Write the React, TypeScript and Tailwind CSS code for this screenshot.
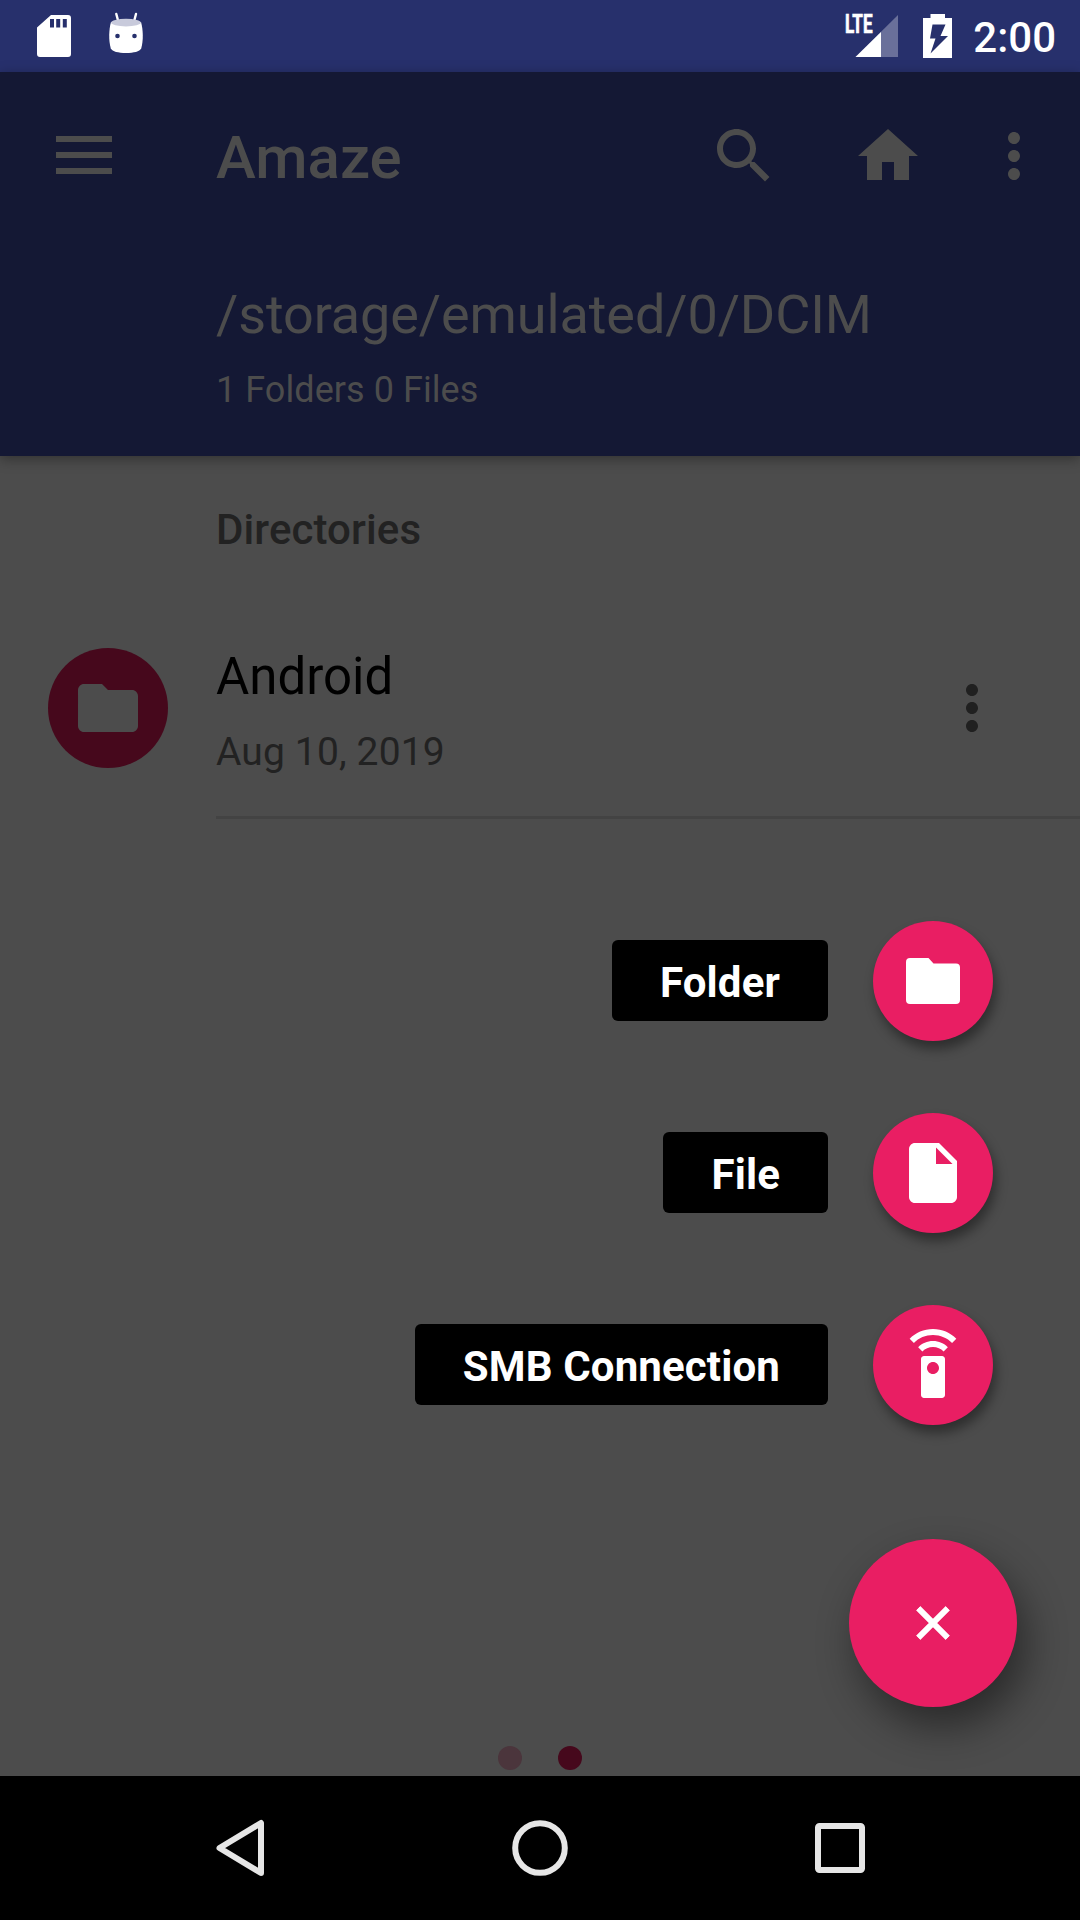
import type { ReactNode } from "react";

function MaterialIcon({ d, className }: { d: string; className?: string }) {
  return (
    <svg viewBox="0 0 24 24" className={`size-[72px] shrink-0 fill-current ${className ?? ""}`}>
      <path d={d} />
    </svg>
  );
}

const PATHS = {
  search:
    "M15.5 14h-.79l-.28-.27C15.41 12.59 16 11.11 16 9.5 16 5.91 13.09 3 9.5 3S3 5.91 3 9.5 5.91 16 9.5 16c1.61 0 3.09-.59 4.23-1.57l.27.28v.79l5 4.99L20.49 19l-4.99-5zm-6 0C7.01 14 5 11.99 5 9.5S7.01 5 9.5 5 14 7.01 14 9.5 11.99 14 9.5 14z",
  home: "M10 20v-6h4v6h5v-8h3L12 3 2 12h3v8z",
  more: "M12 8c1.1 0 2-.9 2-2s-.9-2-2-2-2 .9-2 2 .9 2 2 2zm0 2c-1.1 0-2 .9-2 2s.9 2 2 2 2-.9 2-2-.9-2-2-2zm0 6c-1.1 0-2 .9-2 2s.9 2 2 2 2-.9 2-2-.9-2-2-2z",
  folder: "M10 4H4c-1.1 0-1.99.9-1.99 2L2 18c0 1.1.9 2 2 2h16c1.1 0 2-.9 2-2V8c0-1.1-.9-2-2-2h-8l-2-2z",
  file: "M6 2c-1.1 0-1.99.9-1.99 2L4 20c0 1.1.89 2 1.99 2H18c1.1 0 2-.9 2-2V8l-6-6H6zm7 7V3.5L18.5 9H13z",
  remote:
    "M15 9H9c-.55 0-1 .45-1 1v12c0 .55.45 1 1 1h6c.55 0 1-.45 1-1V10c0-.55-.45-1-1-1zm-3 6c-1.1 0-2-.9-2-2s.9-2 2-2 2 .9 2 2-.9 2-2 2zM7.05 6.05l1.41 1.41C9.37 6.56 10.62 6 12 6s2.63.56 3.54 1.46l1.41-1.41C15.68 4.78 13.93 4 12 4s-3.68.78-4.95 2.05zM12 0C8.96 0 6.21 1.23 4.22 3.22l1.41 1.41C7.26 3.01 9.51 2 12 2s4.74 1.01 6.36 2.64l1.41-1.41C17.79 1.23 15.04 0 12 0z",
};

function StatusBar() {
  return (
    <div className="flex h-[72px] shrink-0 items-center bg-[#27306c] pl-9 pr-6 text-white">
      <svg viewBox="0 0 36 48" className="h-12 w-9">
        <path
          fillRule="evenodd"
          fill="#fff"
          d="M15 3H32a3 3 0 0 1 3 3V42a3 3 0 0 1-3 3H4a3 3 0 0 1-3-3V15.500zM14 7V15.500h4V7zM20.200 7V15.500h4V7zM26.800 7V15.500h4V7z"
        />
      </svg>
      <svg viewBox="0 0 36 48" className="ml-9 h-12 w-9">
        <path d="M8.300 2L10.300 9.500M28 2L26 9.500" stroke="#fff" strokeWidth="2.400" strokeLinecap="round" />
        <path
          fill="#fff"
          d="M3 10C.8 18 .5 28 2.800 36.500C4.500 39.500 10 41 18 41S31.500 39.500 33.200 36.500C35.500 28 35.200 18 33 10z"
        />
        <ellipse cx="18" cy="10.600" rx="15" ry="3.800" fill="#c8cadb" />
        <circle cx="9.500" cy="24" r="2.300" fill="#27306c" />
        <circle cx="26.500" cy="24" r="2.300" fill="#27306c" />
      </svg>
      <svg viewBox="0 0 60 48" className="ml-auto h-12 w-[60px] overflow-visible">
        <path d="M53 3V45H10.500z" fill="#6a709a" />
        <path d="M36 20V45H10.500z" fill="#fff" />
        <text
          x="0"
          y="21"
          fill="#fff"
          stroke="#fff"
          strokeWidth="0.700"
          fontFamily="Roboto, sans-serif"
          fontWeight="700"
          fontSize="25"
          textLength="27.500"
          lengthAdjust="spacingAndGlyphs"
        >
          LTE
        </text>
      </svg>
      <svg viewBox="0 0 30 48" className="ml-[18px] h-12 w-[30px]">
        <path
          fillRule="evenodd"
          fill="#fff"
          d="M7.500 2H22V6H29V46H0V6H7.500zM9.500 12.500L7 26.500H12.500L7.500 41.500L25 24H17.500L22.500 12.500z"
        />
      </svg>
      <span className="ml-5 mt-[3px] text-[42px] font-medium leading-[48px]">2:00</span>
    </div>
  );
}

function AppBar() {
  return (
    <header className="z-10 h-[384px] shrink-0 bg-[#141834] text-[#4c4c4c] shadow-[0_3px_12px_rgba(0,0,0,0.35)]">
      <div className="flex h-[168px] items-center pl-14 pr-[30px]">
        <div className="mb-0.5 flex w-40 flex-col gap-2.5">
          <i className="h-1.5 w-14 bg-current" />
          <i className="h-1.5 w-14 bg-current" />
          <i className="h-1.5 w-14 bg-current" />
        </div>
        <h1 className="mt-[3px] flex-1 text-[60px] font-medium leading-[72px]">Amaze</h1>
        <MaterialIcon d={PATHS.search} />
        <MaterialIcon d={PATHS.home} className="ml-[72px]" />
        <MaterialIcon d={PATHS.more} className="ml-[54px]" />
      </div>
      <div className="pl-[216px] pt-10">
        <p className="text-[54px] leading-[70px] tracking-[-0.1px]">/storage/emulated/0/DCIM</p>
        <p className="mt-[15px] text-[36px] leading-[50px] tracking-[0.06px]">1 Folders 0 Files</p>
      </div>
    </header>
  );
}

function DirectoryList() {
  return (
    <section>
      <h2 className="pl-[216px] pt-[49px] text-[42px] font-medium leading-[50px] tracking-[0.1px] text-[#222]">
        Directories
      </h2>
      <div className="mt-[42px] flex h-[219px] items-start pl-12">
        <div className="mt-[51px] flex size-[120px] items-center justify-center rounded-full bg-[#46081c] text-[#4c4c4c]">
          <MaterialIcon d={PATHS.folder} />
        </div>
        <div className="ml-12 mt-10 flex-1">
          <p className="text-[51px] leading-[80px] text-black">Android</p>
          <p className="text-[39px] leading-[70px] tracking-[0.14px] text-[#222]">Aug 10, 2019</p>
        </div>
        <MaterialIcon d={PATHS.more} className="mr-[72px] mt-[75px] text-[#202020]" />
      </div>
      <hr className="ml-[216px] h-[3px] border-0 bg-[#434343]" />
    </section>
  );
}

function Action({ label, children }: { label: string; children: ReactNode }) {
  return (
    <div className="flex items-center justify-end gap-[45px] pr-6">
      <span className="mb-px flex h-[81px] items-center rounded-[6px] bg-black px-12 pt-1 text-[42px] font-bold leading-[50px] tracking-[0.14px] text-white">
        {label}
      </span>
      <button className="flex size-[120px] items-center justify-center rounded-full bg-[#e91e63] text-white shadow-[3px_8px_12px_rgba(0,0,0,0.4)]">
        {children}
      </button>
    </div>
  );
}

function SpeedDial() {
  return (
    <div className="absolute bottom-[69px] right-[63px] flex flex-col items-end">
      <div className="flex flex-col gap-[72px]">
        <Action label="Folder">
          <svg viewBox="0 0 54 46" className="h-[46px] w-[54px]">
            <path
              fill="#fff"
              d="M4 0H22.500L27.500 5.500H50a4 4 0 0 1 4 4V42a4 4 0 0 1-4 4H4a4 4 0 0 1-4-4V4a4 4 0 0 1 4-4z"
            />
          </svg>
        </Action>
        <Action label="File">
          <MaterialIcon d={PATHS.file} />
        </Action>
        <Action label="SMB Connection">
          <MaterialIcon d={PATHS.remote} />
        </Action>
      </div>
      <button className="mt-[114px] flex size-[168px] items-center justify-center rounded-full bg-[#e91e63] shadow-[9px_20px_40px_rgba(0,0,0,0.45)]">
        <svg viewBox="0 0 42 42" className="size-[42px] rotate-45">
          <path d="M21 0V42M0 21H42" stroke="#fff" strokeWidth="6" />
        </svg>
      </button>
    </div>
  );
}

function NavigationBar() {
  return (
    <nav className="z-10 flex h-36 shrink-0 items-center justify-center gap-60 bg-black">
      <svg viewBox="0 0 60 60" className="size-[60px]" fill="none" stroke="#e6e6e6" strokeWidth="6">
        <path d="M51 5V55L9.500 30z" strokeLinejoin="round" />
      </svg>
      <svg viewBox="0 0 60 60" className="size-[60px]" fill="none" stroke="#e6e6e6" strokeWidth="6">
        <circle cx="30" cy="30" r="24.800" />
      </svg>
      <svg viewBox="0 0 60 60" className="size-[60px]" fill="none" stroke="#e6e6e6" strokeWidth="6">
        <rect x="8" y="8" width="44" height="44" rx="1.500" />
      </svg>
    </nav>
  );
}

export default function App() {
  return (
    <div className="flex h-[1920px] w-[1080px] flex-col overflow-hidden bg-[#4c4c4c] font-[Roboto,sans-serif]">
      <StatusBar />
      <AppBar />
      <main className="relative flex flex-1 flex-col">
        <DirectoryList />
        <div className="mt-auto flex justify-center gap-9 pb-1.5">
          <i className="size-6 rounded-full bg-[#4b353c]" />
          <i className="size-6 rounded-full bg-[#46081c]" />
        </div>
        <SpeedDial />
      </main>
      <NavigationBar />
    </div>
  );
}
